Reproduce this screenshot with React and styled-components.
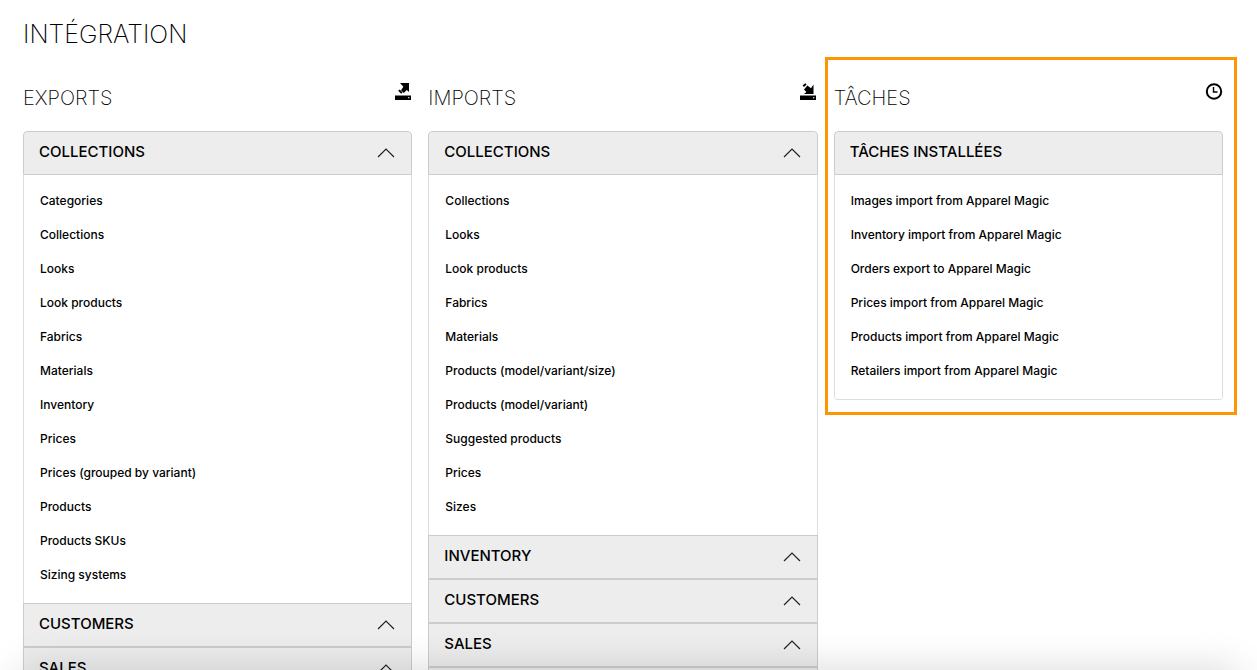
import React, { useState } from 'react'
import styled, { createGlobalStyle } from 'styled-components'

const exportsData = [
  {
    title: 'COLLECTIONS',
    items: [
      'Categories',
      'Collections',
      'Looks',
      'Look products',
      'Fabrics',
      'Materials',
      'Inventory',
      'Prices',
      'Prices (grouped by variant)',
      'Products',
      'Products SKUs',
      'Sizing systems',
    ],
  },
  { title: 'CUSTOMERS', items: [] },
  { title: 'SALES', items: [] },
]

const importsData = [
  {
    title: 'COLLECTIONS',
    items: [
      'Collections',
      'Looks',
      'Look products',
      'Fabrics',
      'Materials',
      'Products (model/variant/size)',
      'Products (model/variant)',
      'Suggested products',
      'Prices',
      'Sizes',
    ],
  },
  { title: 'INVENTORY', items: [] },
  { title: 'CUSTOMERS', items: [] },
  { title: 'SALES', items: [] },
  { title: '', items: [] },
]

const tasks = [
  'Images import from Apparel Magic',
  'Inventory import from Apparel Magic',
  'Orders export to Apparel Magic',
  'Prices import from Apparel Magic',
  'Products import from Apparel Magic',
  'Retailers import from Apparel Magic',
]

const Chevron = () => (
  <svg width="18" height="10" viewBox="0 0 18 10" fill="none" stroke="#222" strokeWidth="1.2" aria-hidden="true">
    <path d="M1 9 9 1l8 8" />
  </svg>
)

const ExportIcon = () => (
  <svg width="18" height="18" viewBox="-1 0 18 18" aria-hidden="true">
    <path d="M5 1h9v9l-2.2-2-3 3L6 8.2l2.4-3.4z" />
    <path d="M3.2 8.8l1.4-1.2 3 3-1.4 1.2z" />
    <path d="M0 13.5h16V18H0z" />
    <path d="M13 15.2h1.4v1H13z" fill="#fff" />
  </svg>
)

const ImportIcon = () => (
  <svg width="18" height="18" viewBox="0 0 18 18" aria-hidden="true">
    <path d="M13.5 2.5V12H4l2.4-2-2.4-2.6 3.4-3.8 3.6 2.6z" />
    <path d="M2.6 3.6l2.6-2.4 1.4 1.4L4 5z" />
    <path d="M0 13.5h16V18H0z" />
    <path d="M13 15.2h1.4v1H13z" fill="#fff" />
  </svg>
)

const ClockIcon = () => (
  <svg width="18" height="18" viewBox="0 0 18 18" fill="none" stroke="#000" aria-hidden="true">
    <circle cx="9" cy="9.5" r="7.2" strokeWidth="2" />
    <path d="M8.5 5v5h4" strokeWidth="1.4" />
  </svg>
)

function Accordion({ sections }) {
  const [closed, setClosed] = useState({})

  return (
    <Card>
      {sections.map((section, i) => (
        <section key={i}>
          <SectionButton
            aria-expanded={section.items.length > 0 && !closed[i]}
            onClick={() => setClosed({ ...closed, [i]: !closed[i] })}
          >
            <span>{section.title}</span>
            <Chevron />
          </SectionButton>
          {section.items.length > 0 && !closed[i] && <Links items={section.items} />}
        </section>
      ))}
    </Card>
  )
}

function Links({ items }) {
  return (
    <List>
      {items.map((item) => (
        <li key={item}>
          <ItemLink href="#">{item}</ItemLink>
        </li>
      ))}
    </List>
  )
}

export default function App() {
  return (
    <Page>
      <GlobalStyle />
      <Title>INTÉGRATION</Title>

      <Columns>
        <Column>
          <ColumnHead>
            <h2>EXPORTS</h2>
            <ExportIcon />
          </ColumnHead>
          <Accordion sections={exportsData} />
        </Column>

        <Column>
          <ColumnHead>
            <h2>IMPORTS</h2>
            <ImportIcon />
          </ColumnHead>
          <Accordion sections={importsData} />
        </Column>

        <Column $highlight>
          <ColumnHead>
            <h2>TÂCHES</h2>
            <ClockIcon />
          </ColumnHead>
          <Card $closed>
            <SectionTitle>TÂCHES INSTALLÉES</SectionTitle>
            <Links items={tasks} />
          </Card>
        </Column>
      </Columns>

      <BottomShade />
    </Page>
  )
}

const GlobalStyle = createGlobalStyle`
  * {
    box-sizing: border-box;
  }
  body {
    margin: 0;
    background: #fff;
    color: #000;
    font-family: Inter, "Liberation Sans", sans-serif;
  }
`

const Page = styled.main`
  height: 100vh;
  overflow: hidden;
  padding: 18px 34px 0 23px;
`

const Title = styled.h1`
  margin: 0;
  font-size: 25px;
  line-height: 32px;
  font-weight: 200;
`

const Columns = styled.div`
  display: grid;
  grid-template-columns: repeat(3, 1fr);
  gap: 16px;
  align-items: start;
  margin-top: 32px;
`

/* the highlight frame is drawn over the gutters around the column */
const Column = styled.div`
  position: relative;

  ${({ $highlight }) => $highlight && `
    &::after {
      content: '';
      position: absolute;
      inset: -25px -14px -15px -9px;
      border: 3px solid #ff9500;
      pointer-events: none;
    }
  `}
`

const ColumnHead = styled.header`
  display: flex;
  justify-content: space-between;
  align-items: flex-start;
  height: 49px;

  h2 {
    margin: 0;
    font-size: 20px;
    line-height: 32px;
    font-weight: 200;
  }
`

const Card = styled.div`
  border-radius: 4px;
  overflow: hidden;
  border: solid #dedede;
  border-width: ${({ $closed }) => ($closed ? '0 0 1px' : '0')};
`

const SectionTitle = styled.h3`
  display: flex;
  align-items: center;
  justify-content: space-between;
  width: 100%;
  height: 44px;
  margin: 0;
  padding: 0 15px 3px;
  border: 1px solid #ccc;
  background: #ededed;
  color: #000;
  font-family: inherit;
  font-size: 15px;
  font-weight: 500;
  text-align: left;

  section:first-child > &,
  ${Card} > & {
    border-radius: 4px 4px 0 0;
  }
`

const SectionButton = styled(SectionTitle).attrs({ as: 'button', type: 'button' })`
  padding: 0 16px 0 15px;
  cursor: pointer;

  span {
    padding-bottom: 3px;
  }
`

const List = styled.ul`
  margin: 0;
  padding: 9px 16px 11px;
  border: solid #dedede;
  border-width: 0 1px;
  list-style: none;
`

const ItemLink = styled.a`
  display: block;
  color: #000;
  font-size: 12px;
  line-height: 34px;
  font-weight: 500;
  text-decoration: none;
`

/* sits just under the viewport, only its shadow shows */
const BottomShade = styled.div`
  position: fixed;
  left: 20px;
  right: 20px;
  bottom: -60px;
  height: 60px;
  box-shadow: 0 0 40px rgba(0, 0, 0, 0.16);
  pointer-events: none;
`
